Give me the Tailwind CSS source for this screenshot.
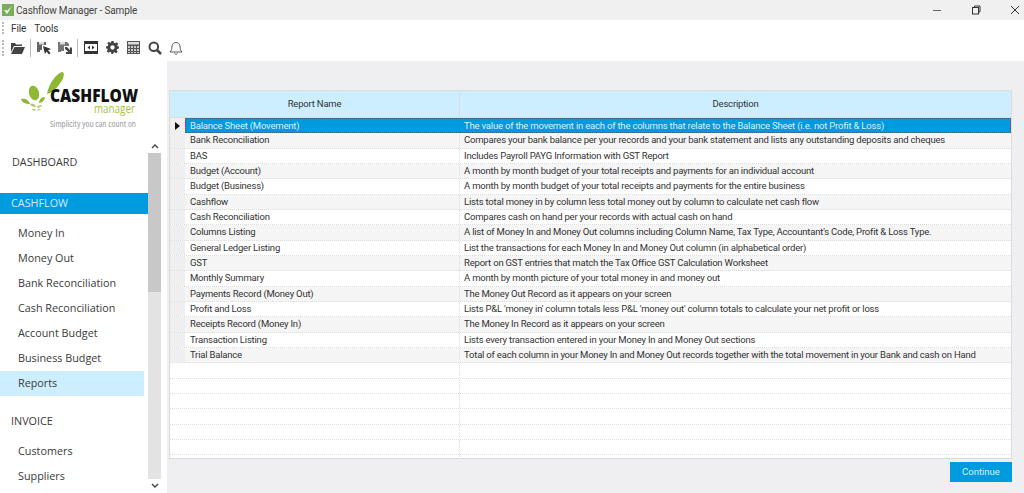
<!DOCTYPE html>
<html lang="en">
<head>
    <meta charset="UTF-8">
    <title>Cashflow Manager - Sample</title>
    <script src="https://cdn.jsdelivr.net/npm/@tailwindcss/browser@4"></script>
</head>
<body class="bg-white overflow-hidden font-['Open_Sans',sans-serif] text-[#333]">
<div class="w-[1024px] h-[493px] flex flex-col overflow-hidden">

    <!-- Title bar -->
    <div class="h-[20px] bg-[#f0f0f0] flex items-center pl-[2px] shrink-0">
        <svg class="w-[12px] h-[12px]" viewBox="0 0 12 12"><rect width="12" height="12" fill="#79ad5c"/><path d="M2 6l3 4 5-8-4.500 4.500z" fill="#fff"/></svg>
        <span class="ml-[2px] text-[10px] tracking-[-0.15px] text-[#444] font-['Roboto']">Cashflow Manager - Sample</span>
        <div class="ml-auto flex items-center">
            <svg class="w-[10px] h-[10px] mr-[29px]" viewBox="0 0 10 10"><path d="M1 5.500h8" stroke="#666" stroke-width="1"/></svg>
            <svg class="w-[10px] h-[10px] mr-[29px]" viewBox="0 0 10 10" fill="none" stroke="#333"><rect x="1.500" y="2.500" width="6" height="6.500"/><path d="M3.500 2.500V1h5.500v6H7.500"/></svg>
            <svg class="w-[10px] h-[10px] mr-[4px]" viewBox="0 0 10 10"><path d="M1 1l8 8M9 1l-8 8" stroke="#333" stroke-width="1"/></svg>
        </div>
    </div>

    <!-- Menu -->
    <div class="h-[16px] flex items-center text-[10px] tracking-[-0.1px] text-[#333] font-['Roboto'] shrink-0">
        <div class="w-[2px] h-[12px] ml-[2px] border-l-2 border-dotted border-[#bbb]"></div>
        <span class="ml-[7px]">File</span>
        <span class="ml-[8px]">Tools</span>
    </div>

    <!-- Toolbar -->
    <div class="h-[25px] flex items-center pb-[2px] shrink-0">
        <div class="w-[2px] h-[16px] ml-[2px] border-l-2 border-dotted border-[#bbb]"></div>
        <svg class="ml-[7px] w-[14px] h-[12px]" viewBox="0 0 14 12" fill="#444"><path d="M0 1h4l1 1.500h6V4H3L0 10z"/><path d="M3.500 5H14l-3 7H0z"/></svg>
        <div class="ml-[5px] w-px h-[18px] bg-[#bbb]"></div>
        <svg class="ml-[6px] w-[14px] h-[14px]" viewBox="0 0 14 14"><path d="M0 1h9v3H5v5H3v2H0z" fill="#666"/><rect x="2" y="1" width="5" height="2.500" fill="#ddd"/><path d="M6 5l8 3-3 1.200 2.500 2.800-1.500 1.500L9.500 10.500 8 13z" fill="#333"/></svg>
        <svg class="ml-[7px] w-[14px] h-[14px]" viewBox="0 0 14 14"><path d="M0 1h9l2 2v2H6v5H3v1H0z" fill="#777"/><rect x="2" y="1" width="5" height="2.500" fill="#ddd"/><path d="M7 6h2l3 3V6.500h2V13H8v-2h2.500L7 8z" fill="#444"/></svg>
        <div class="ml-[5px] w-px h-[18px] bg-[#bbb]"></div>
        <svg class="ml-[6px] w-[14px] h-[13px]" viewBox="0 0 14 13"><rect x=".5" y=".5" width="13" height="12" fill="#fff" stroke="#333"/><rect x="1" y="1" width="12" height="2" fill="#333"/><rect x="1" y="10" width="12" height="2" fill="#333"/><path d="M6 4.500v4L3.500 6.500zM8 4.500v4l2.500-2z" fill="#333"/></svg>
        <svg class="ml-[8px] w-[13px] h-[13px]" viewBox="0 0 24 24" fill="#444"><path fill-rule="evenodd" d="M10 0h4l.7 3.300 2.300 1 2.900-1.900 2.800 2.800L20.800 8l1 2.300L24 10v4l-3.300.7-1 2.300 1.900 2.900-2.800 2.800L16 20.800l-2.300 1L13 24h-3l-.7-3.300-2.300-1-2.900 1.900-2.800-2.800L3.200 16l-1-2.300L0 14v-4l3.300-.7 1-2.300-1.900-2.900 2.800-2.800L8 3.200l1.300-.5zM12 8a4 4 0 100 8 4 4 0 000-8z"/></svg>
        <svg class="ml-[8px] w-[13px] h-[13px]" viewBox="0 0 13 13"><rect width="13" height="13" fill="#555"/><rect x="1" y="1" width="11" height="2.500" fill="#ddd"/><path d="M1 5h2v2H1zM4 5h2v2H4zM7 5h2v2H7zM10 5h2v2h-2zM1 8h2v2H1zM4 8h2v2H4zM7 8h2v2H7zM10 8h2v2h-2zM1 11h2v1H1zM4 11h2v1H4zM7 11h2v1H7zM10 11h2v1h-2z" fill="#ccc"/></svg>
        <svg class="ml-[8px] w-[14px] h-[14px]" viewBox="0 0 14 14" fill="none" stroke="#444"><circle cx="5.800" cy="5.800" r="4.300" stroke-width="2"/><path d="M9 9l4 4" stroke-width="2.500"/></svg>
        <svg class="ml-[7px] w-[14px] h-[14px]" viewBox="0 0 14 14" fill="none" stroke="#555"><path d="M1 11c1.500-1.500 2-3 2-5.500C3 3 5 1.500 7 1.500S11 3 11 5.500c0 2.500.5 4 2 5.500z"/><path d="M5.500 12.500c.5 1 2.500 1 3 0"/></svg>
    </div>

    <div class="flex flex-1 min-h-0">
        <!-- Sidebar -->
        <div class="w-[167px] shrink-0 flex flex-col">
            <svg class="w-[148px] h-[78px] shrink-0" viewBox="0 61 148 78">
                <path d="M47 94C49 83 56 74 62 72c3 0 2 6-1 10-4 6-9 11-14 12z" fill="#8cb833"/>
                <ellipse cx="34" cy="93" rx="5" ry="7.500" transform="rotate(-15 34 93)" fill="#8cb833"/>
                <path d="M21 99c4-1 8 1 9 5-4 0-8-1-9-5zM45 97c0 3-3 6-6 6 0-3 2-6 6-6z" fill="#8cb833"/>
                <path d="M30 104c3-1 5 0 6 3-3 0-5-1-6-3zM42 105c-1 2-3 3-5 3 0-2 2-3 5-3zM32 109c2 0 4 0 4 1-1 1-3 1-4-1zM41 109c-1 1-2 2-4 1 1-1 2-1 4-1z" fill="#a9c95c"/>
                <text x="50" y="102" font-family="Open Sans" font-weight="800" font-size="18" fill="#111" textLength="88" lengthAdjust="spacingAndGlyphs">CASHFLOW</text>
                <text x="94" y="113" font-family="Open Sans" font-size="13" fill="#a4c639" textLength="41" lengthAdjust="spacingAndGlyphs">manager</text>
                <text x="50" y="127" font-family="Open Sans" font-weight="600" font-size="8.500" fill="#a8a8a8" textLength="86" lengthAdjust="spacingAndGlyphs">Simplicity you can count on</text>
            </svg>
            <div class="flex flex-1 min-h-0">
                <nav class="w-[148px] text-[10.800px] text-[#3a3a3a] flex flex-col">
                    <div class="h-[46px] pl-[12px] flex items-center">DASHBOARD</div>
                    <div class="h-[21px] mt-[8px] pl-[11px] flex items-center bg-[#009ade] text-[#cfeefc]">CASHFLOW</div>
                    <div class="h-[25px] pl-[18px] flex items-center mt-[7px]">Money In</div>
                    <div class="h-[25px] pl-[18px] flex items-center">Money Out</div>
                    <div class="h-[25px] pl-[18px] flex items-center">Bank Reconciliation</div>
                    <div class="h-[25px] pl-[18px] flex items-center">Cash Reconciliation</div>
                    <div class="h-[25px] pl-[18px] flex items-center">Account Budget</div>
                    <div class="h-[25px] pl-[18px] flex items-center">Business Budget</div>
                    <div class="h-[25px] w-[144px] pl-[18px] flex items-center bg-[#cceeff]">Reports</div>
                    <div class="h-[25px] pl-[11px] flex items-center mt-[13px]">INVOICE</div>
                    <div class="h-[25px] pl-[18px] flex items-center mt-[5px]">Customers</div>
                    <div class="h-[25px] pl-[18px] flex items-center">Suppliers</div>
                </nav>
                <!-- Scrollbar -->
                <div class="w-[13px] flex flex-col bg-[#e3e3e3]">
                    <div class="h-[14px] bg-white flex items-center justify-center">
                        <svg class="w-[8px] h-[6px]" viewBox="0 0 8 6" fill="none" stroke="#444" stroke-width="1.400"><path d="M1 5l3-3 3 3"/></svg>
                    </div>
                    <div class="h-[139px] bg-[#c8c8c8]"></div>
                    <div class="flex-1"></div>
                    <div class="h-[14px] bg-white flex items-center justify-center">
                        <svg class="w-[8px] h-[6px]" viewBox="0 0 8 6" fill="none" stroke="#444" stroke-width="1.400"><path d="M1 1l3 3 3-3"/></svg>
                    </div>
                </div>
            </div>
        </div>

        <!-- Main panel -->
        <main class="flex-1 min-w-0 bg-[#efeff2] pl-[2px] pr-[12px] pt-[29px] flex flex-col">
            <div class="h-[369px] bg-white border border-[#dcdcdc] text-[9.500px] tracking-[-0.2px] text-[#333] font-['Roboto'] overflow-hidden">
                <div class="h-[27px] pt-[1px] flex bg-[#cceeff] border-b border-[#ddd]">
                    <div class="w-[290px] border-r border-[#ddd] flex items-center justify-center">Report Name</div>
                    <div class="flex-1 flex items-center justify-center">Description</div>
                </div>
                <!-- selected row -->
                <div class="h-[15.330px] flex">
                    <div class="w-[15px] bg-[#efefef] flex items-center justify-center"><svg class="w-[5px] h-[8px]" viewBox="0 0 5 8"><path d="M0 0l5 4-5 4z" fill="#111"/></svg></div>
                    <div class="flex-1 min-w-0 flex items-center bg-[#009ade] text-[#d8f2ff] border border-dotted border-[#7a4a35]">
                        <div class="w-[274px] pl-[4px] shrink-0">Balance Sheet (Movement)</div>
                        <div class="pl-[4px] whitespace-nowrap">The value of the movement in each of the columns that relate to the Balance Sheet (i.e. not Profit &amp; Loss)</div>
                    </div>
                </div>
                <div class="h-[15.330px] flex bg-[#f5f5f5] border-b border-dotted border-[#ddd]"><div class="w-[15px] shrink-0 bg-[#efefef]"></div><div class="w-[275px] shrink-0 pl-[5px] border-r border-dotted border-[#ddd] flex items-center">Bank Reconciliation</div><div class="pl-[4px] flex items-center whitespace-nowrap">Compares your bank balance per your records and your bank statement and lists any outstanding deposits and cheques</div></div>
                <div class="h-[15.330px] flex border-b border-dotted border-[#ddd]"><div class="w-[15px] shrink-0 bg-[#efefef]"></div><div class="w-[275px] shrink-0 pl-[5px] border-r border-dotted border-[#ddd] flex items-center">BAS</div><div class="pl-[4px] flex items-center whitespace-nowrap">Includes Payroll PAYG Information with GST Report</div></div>
                <div class="h-[15.330px] flex bg-[#f5f5f5] border-b border-dotted border-[#ddd]"><div class="w-[15px] shrink-0 bg-[#efefef]"></div><div class="w-[275px] shrink-0 pl-[5px] border-r border-dotted border-[#ddd] flex items-center">Budget (Account)</div><div class="pl-[4px] flex items-center whitespace-nowrap">A month by month budget of your total receipts and payments for an individual account</div></div>
                <div class="h-[15.330px] flex border-b border-dotted border-[#ddd]"><div class="w-[15px] shrink-0 bg-[#efefef]"></div><div class="w-[275px] shrink-0 pl-[5px] border-r border-dotted border-[#ddd] flex items-center">Budget (Business)</div><div class="pl-[4px] flex items-center whitespace-nowrap">A month by month budget of your total receipts and payments for the entire business</div></div>
                <div class="h-[15.330px] flex bg-[#f5f5f5] border-b border-dotted border-[#ddd]"><div class="w-[15px] shrink-0 bg-[#efefef]"></div><div class="w-[275px] shrink-0 pl-[5px] border-r border-dotted border-[#ddd] flex items-center">Cashflow</div><div class="pl-[4px] flex items-center whitespace-nowrap">Lists total money in by column less total money out by column to calculate net cash flow</div></div>
                <div class="h-[15.330px] flex border-b border-dotted border-[#ddd]"><div class="w-[15px] shrink-0 bg-[#efefef]"></div><div class="w-[275px] shrink-0 pl-[5px] border-r border-dotted border-[#ddd] flex items-center">Cash Reconciliation</div><div class="pl-[4px] flex items-center whitespace-nowrap">Compares cash on hand per your records with actual cash on hand</div></div>
                <div class="h-[15.330px] flex bg-[#f5f5f5] border-b border-dotted border-[#ddd]"><div class="w-[15px] shrink-0 bg-[#efefef]"></div><div class="w-[275px] shrink-0 pl-[5px] border-r border-dotted border-[#ddd] flex items-center">Columns Listing</div><div class="pl-[4px] flex items-center whitespace-nowrap">A list of Money In and Money Out columns including Column Name, Tax Type, Accountant's Code, Profit &amp; Loss Type.</div></div>
                <div class="h-[15.330px] flex border-b border-dotted border-[#ddd]"><div class="w-[15px] shrink-0 bg-[#efefef]"></div><div class="w-[275px] shrink-0 pl-[5px] border-r border-dotted border-[#ddd] flex items-center">General Ledger Listing</div><div class="pl-[4px] flex items-center whitespace-nowrap">List the transactions for each Money In and Money Out column (in alphabetical order)</div></div>
                <div class="h-[15.330px] flex bg-[#f5f5f5] border-b border-dotted border-[#ddd]"><div class="w-[15px] shrink-0 bg-[#efefef]"></div><div class="w-[275px] shrink-0 pl-[5px] border-r border-dotted border-[#ddd] flex items-center">GST</div><div class="pl-[4px] flex items-center whitespace-nowrap">Report on GST entries that match the Tax Office GST Calculation Worksheet</div></div>
                <div class="h-[15.330px] flex border-b border-dotted border-[#ddd]"><div class="w-[15px] shrink-0 bg-[#efefef]"></div><div class="w-[275px] shrink-0 pl-[5px] border-r border-dotted border-[#ddd] flex items-center">Monthly Summary</div><div class="pl-[4px] flex items-center whitespace-nowrap">A month by month picture of your total money in and money out</div></div>
                <div class="h-[15.330px] flex bg-[#f5f5f5] border-b border-dotted border-[#ddd]"><div class="w-[15px] shrink-0 bg-[#efefef]"></div><div class="w-[275px] shrink-0 pl-[5px] border-r border-dotted border-[#ddd] flex items-center">Payments Record (Money Out)</div><div class="pl-[4px] flex items-center whitespace-nowrap">The Money Out Record as it appears on your screen</div></div>
                <div class="h-[15.330px] flex border-b border-dotted border-[#ddd]"><div class="w-[15px] shrink-0 bg-[#efefef]"></div><div class="w-[275px] shrink-0 pl-[5px] border-r border-dotted border-[#ddd] flex items-center">Profit and Loss</div><div class="pl-[4px] flex items-center whitespace-nowrap">Lists P&amp;L 'money in' column totals less P&amp;L 'money out' column totals to calculate your net profit or loss</div></div>
                <div class="h-[15.330px] flex bg-[#f5f5f5] border-b border-dotted border-[#ddd]"><div class="w-[15px] shrink-0 bg-[#efefef]"></div><div class="w-[275px] shrink-0 pl-[5px] border-r border-dotted border-[#ddd] flex items-center">Receipts Record (Money In)</div><div class="pl-[4px] flex items-center whitespace-nowrap">The Money In Record as it appears on your screen</div></div>
                <div class="h-[15.330px] flex border-b border-dotted border-[#ddd]"><div class="w-[15px] shrink-0 bg-[#efefef]"></div><div class="w-[275px] shrink-0 pl-[5px] border-r border-dotted border-[#ddd] flex items-center">Transaction Listing</div><div class="pl-[4px] flex items-center whitespace-nowrap">Lists every transaction entered in your Money In and Money Out sections</div></div>
                <div class="h-[15.330px] flex bg-[#f5f5f5] border-b border-dotted border-[#ddd]"><div class="w-[15px] shrink-0 bg-[#efefef]"></div><div class="w-[275px] shrink-0 pl-[5px] border-r border-dotted border-[#ddd] flex items-center">Trial Balance</div><div class="pl-[4px] flex items-center whitespace-nowrap">Total of each column in your Money In and Money Out records together with the total movement in your Bank and cash on Hand</div></div>
                <!-- empty rows -->
                <div class="h-[15.330px] border-b border-dotted border-[#ddd]"><div class="w-[290px] h-full border-r border-dotted border-[#ddd]"></div></div>
                <div class="h-[15.330px] border-b border-dotted border-[#ddd]"><div class="w-[290px] h-full border-r border-dotted border-[#ddd]"></div></div>
                <div class="h-[15.330px] border-b border-dotted border-[#ddd]"><div class="w-[290px] h-full border-r border-dotted border-[#ddd]"></div></div>
                <div class="h-[15.330px] border-b border-dotted border-[#ddd]"><div class="w-[290px] h-full border-r border-dotted border-[#ddd]"></div></div>
                <div class="h-[15.330px] border-b border-dotted border-[#ddd]"><div class="w-[290px] h-full border-r border-dotted border-[#ddd]"></div></div>
                <div class="h-[15.330px] border-b border-dotted border-[#ddd]"><div class="w-[290px] h-full border-r border-dotted border-[#ddd]"></div></div>
                <div class="h-[15.330px]"><div class="w-[290px] h-full border-r border-dotted border-[#ddd]"></div></div>
            </div>
            <div class="flex justify-end mt-[3px]">
                <button class="w-[62px] h-[20px] bg-[#009ade] text-[#d8f2ff] text-[9.500px] font-['Roboto'] flex items-center justify-center">Continue</button>
            </div>
        </main>
    </div>
</div>
</body>
</html>
